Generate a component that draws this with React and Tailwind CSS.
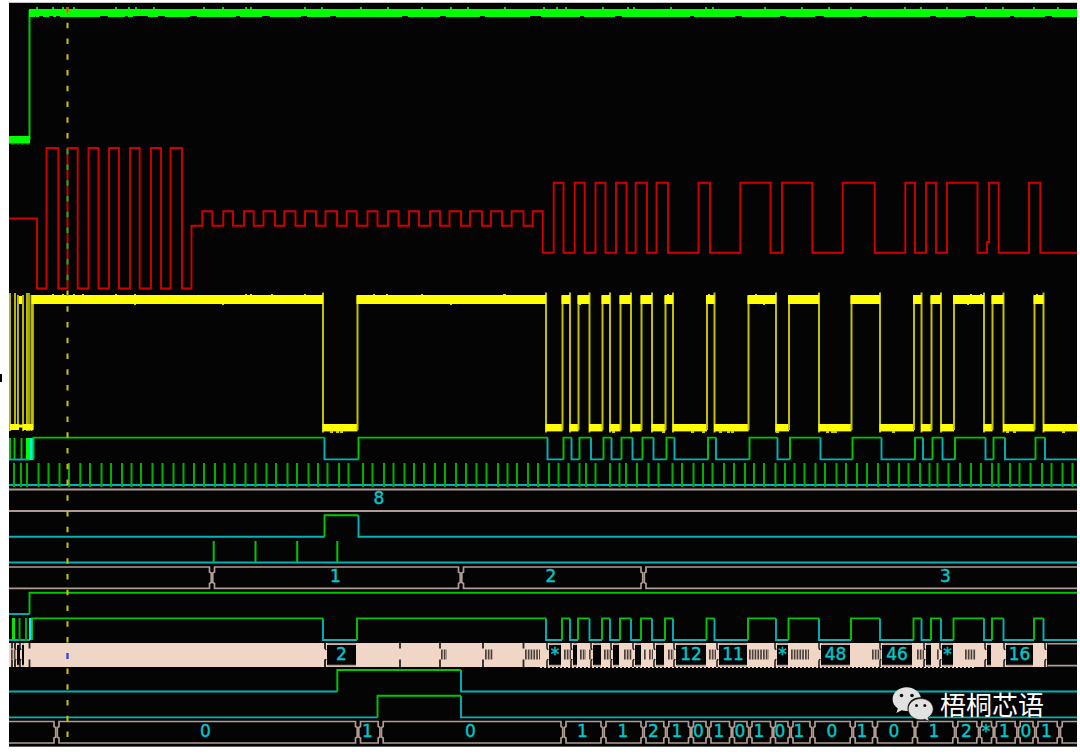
import React from 'react';

const GREEN = '#00c800';
const CYAN = '#00b4b8';
const RED = '#d00000';
const BUS = '#b09c92';
const FILL = '#f0d6c6';
const LEFT = 9;
const RIGHT = 1077;

// [rise, fall] pairs of the demodulated bit stream
const PULSES = [
  [357, 546], [562, 570], [578, 589.5], [602, 610], [620, 631], [641, 652], [665, 673],
  [706.5, 714.5], [748, 776], [788.5, 819], [851, 880], [913.5, 921.5], [931, 941],
  [953.5, 984], [992, 1003.5], [1034, 1043.5],
];

const CARRIER_BIG = [
  [46.5, 58.3], [67.5, 77.7], [88.5, 98.5], [109, 119], [130, 139.7], [151, 161], [170.5, 182],
];

const CARRIER_SMALL = [
  [202.3, 212.3], [223.3, 233], [244, 253.7], [263.5, 275], [284.3, 295.5], [305, 316],
  [325.5, 337], [346.7, 356.7], [367.5, 377.5], [388, 398.5], [409, 419], [430, 440],
  [449.5, 461], [470, 482], [491, 502], [511.7, 523.5],
];

const CARRIER_MID = [
  [553.7, 563.5], [574.7, 584.7], [595.5, 605.5], [616, 626.5], [635.7, 647], [656.5, 668],
  [698.5, 710], [740.3, 770.5], [782, 812.3], [842.7, 874.7], [905.3, 915], [926, 936], [947, 977.5],
];

const CLOCK = [
  14, 21, 27, 38.5, 48.5, 59.5, 69, 80.3, 90, 101.5, 111, 122, 131.5, 141, 152.5, 162.5, 173.5,
  183.5, 194, 204, 215, 224.5, 234.5, 245.5, 255.5, 266.5, 276, 287.5, 297, 308.5, 318, 327.5, 339,
  348.5, 363, 372.5, 384, 393.5, 404.5, 414, 424, 435, 445, 456, 466, 476.5, 486.5, 498, 507.5, 517,
  528, 538, 549, 558.5, 568.5, 579.5, 586, 595.5, 610, 619.5, 626, 637, 648.5, 658.5, 672.5, 682,
  693.5, 703, 712.5, 724, 734, 745, 754, 764, 775.5, 785, 794.5, 804.5, 815.5, 825, 836.5, 846, 857,
  867, 878, 888, 899, 908.5, 920, 929.5, 937.5, 948.5, 960, 971, 981, 992, 998.5, 1010, 1019.5,
  1030.5, 1042, 1051.5, 1062.5, 1072.5,
];

const STATE_CUTS = [212, 461, 643.5];
const STATE_LABELS = [[335.5, '1'], [551, '2'], [945.5, '3']];

const SYMBOL_CUTS = [
  56.5, 358, 380.7, 563.5, 603.5, 643.5, 666.3, 691, 708.5, 732, 749.5, 773, 790.5, 812.5, 852.7,
  875, 915, 955.3, 979.3, 994, 1017.7, 1035.5, 1059.7,
];
const SYMBOL_LABELS = [
  [205.5, '0'], [367.5, '1'], [470.5, '0'], [582.5, '1'], [623, '1'], [653.5, '2'], [677, '1'],
  [698.5, '0'], [719, '1'], [740, '0'], [759, '1'], [780, '0'], [799, '1'], [832, '0'], [862, '1'],
  [894, '0'], [934, '1'], [966.5, '2'], [986, '*'], [1004.5, '1'], [1026, '0'], [1046.5, '1'],
];

// counter bus: stable windows, with a value where there is room for one
const COUNTS = [
  [17, 20, ''], [22, 24, ''], [327, 356, '2'], [549, 561, '*'], [573, 577, ''], [593, 601, ''],
  [613, 619, ''], [635, 641, ''], [656, 664, ''], [676, 706, '12'], [719, 747, '11'],
  [777, 788, '*'], [821, 850, '48'], [882, 912, '46'], [926, 931, ''], [942, 953, '*'],
  [987, 991, ''], [1006, 1033, '16'], [1047, 1080, ''],
];
const COUNT_MARKS = [12, 15, 29.5, 325, 400, 440, 483, 523.5];
const COUNT_STRIPES = [
  [11, 16], [441, 447], [485, 493], [525, 540], [564, 571], [580, 586], [589, 591], [604, 611],
  [624, 632], [644, 646], [649, 653], [668, 674], [709, 716], [749, 769], [791, 809], [872, 881],
  [917, 924], [937, 939], [965, 976],
];

const TOP_NOISE = [
  37, 53, 63, 74, 116, 129, 136, 154, 204, 223, 246, 251, 305, 322, 361, 388, 422, 451, 468, 505,
  544, 557, 566, 603, 628, 634, 671, 706, 713, 765, 802, 829, 851, 905, 921, 947, 986, 1003, 1034, 1058,
];
const TOP_NOTCHES = [
  [35, 36], [39, 43], [49, 53], [56, 60], [100, 108], [125, 128], [133, 148], [158, 165],
  [190, 197], [236, 240], [262, 270], [301, 307], [330, 336], [402, 408], [440, 446], [480, 485],
  [530, 541], [580, 584], [615, 622], [690, 694], [735, 742], [780, 786], [815, 824], [862, 867],
  [930, 936], [966, 975], [1010, 1014], [1045, 1052],
];
const YELLOW_NOISE = [53, 63, 74, 83, 116, 135, 246, 251, 272, 305, 374, 387, 422, 504, 505, 668, 709, 756, 971, 981, 1037];
const YELLOW_DIPS = [135, 223, 451, 580, 764, 968];
const LOW_DIPS = [331, 337, 341, 613, 663, 692, 703, 720, 728, 732, 777, 827, 832, 835, 893, 1007, 1014, 1063];

function wave(start, pulses, low, high) {
  let d = start;
  pulses.forEach(([a, b]) => {
    d += ` H${a} V${high} H${b} V${low}`;
  });
  return d;
}

function Trace({ d, color, width = 1.9 }) {
  return <path d={d} fill="none" stroke={color} strokeWidth={width} />;
}

function Label({ x, y, children }) {
  return (
    <text
      x={x}
      y={y}
      textAnchor="middle"
      fill="#00c8cc"
      stroke="#00c8cc"
      strokeWidth="0.4"
      fontSize="17"
      fontFamily='"DejaVu Sans", sans-serif'
    >
      {children}
    </text>
  );
}

// two level signal: green while high and on rising edges, cyan while low and on falling ones
function Digital({ pulses, high, low, start = LEFT, shift = 0 }) {
  let up = '';
  let down = `M${start} ${low}`;
  pulses.forEach(([a, b]) => {
    down += ` H${a + shift}`;
    up += ` M${a + shift} ${low} V${high} H${b + shift}`;
    if (b < RIGHT) down += ` M${b + shift} ${high} V${low}`;
  });
  if (pulses[pulses.length - 1][1] < RIGHT) down += ` H${RIGHT}`;
  return (
    <g>
      <Trace d={down} color={CYAN} />
      <Trace d={up} color={GREEN} />
    </g>
  );
}

function Bus({ cuts, top, bottom, labels }) {
  const edges = [LEFT - 10, ...cuts, RIGHT + 10];
  return (
    <g>
      {edges.slice(0, -1).map((a, i) => {
        const b = edges[i + 1];
        return (
          <path
            key={a}
            d={`M${a + 2.5} ${top} V${top + 5} L${a + 0.8} ${top + 6} V${bottom - 6} L${a + 2.5} ${bottom - 5} V${bottom} H${b - 2.5} V${bottom - 5} L${b - 0.8} ${bottom - 6} V${top + 6} L${b - 2.5} ${top + 5} V${top} Z`}
            fill="none"
            stroke={BUS}
            strokeWidth="1.7"
          />
        );
      })}
      {labels.map(([x, t]) => <Label key={x} x={x} y={bottom - 6}>{t}</Label>)}
    </g>
  );
}

function AnalogTop() {
  return (
    <g>
      <Trace d="M29.500 140 V10" color={GREEN} width={2} />
      <rect x="29" y="9" width="1048" height="8" fill="#00ff00" />
      <rect x="9" y="136" width="21" height="7.500" fill="#00ff00" />
      {TOP_NOISE.map(x => <rect key={x} x={x - 1} y="7" width="2" height="2" fill="#00d800" />)}
      {TOP_NOTCHES.map(([a, b]) => <rect key={a} x={a} y="16" width={b - a} height="1" fill="#040404" />)}
      <path d="M11 144 h4 M17 144 h2 M21 144 h3 M26 144 h3" stroke="#00b000" />
    </g>
  );
}

function Carrier() {
  const d = wave('M9 218.5 H37 V288.5', CARRIER_BIG, 288.5, 148)
    + wave(' H191.5 V225.7', CARRIER_SMALL, 225.7, 211.3)
    + ' H532.7 V211.3 H542.7 V252.7'
    + wave('', CARRIER_MID, 252.7, 182.7)
    + ' H987 V242 H989 V182.7 H998.7 V252.7 H1029 V182.7 H1040.3 V252.7 H1077';
  return <Trace d={d} color={RED} />;
}

function Envelope() {
  const all = [[32, 323], ...PULSES];
  return (
    <g>
      <path
        d="M10 293 V431 M15 293 V430 M18 295 V430 M21 296 V303 M23 295 V431 M27 293 V431 M31.500 295 V431"
        stroke="#b8b800"
        strokeWidth="2"
      />
      <path d="M29 293 V431 M33 296 V430" stroke="#e8e800" strokeWidth="1.400" />
      <path d="M10 427 H19 M23 427 H33" stroke="#ffff00" strokeWidth="6" />
      <path d="M10 426 H32 M20.500 296 V304" stroke="#ffff00" strokeWidth="3" />
      {all.map(([a, b], i) => {
        const next = all[i + 1] ? all[i + 1][0] : RIGHT;
        return (
          <g key={a}>
            {i > 0 && <path d={`M${a + 0.5} 296 V430`} stroke="#c0c000" strokeWidth="2" />}
            <path d={`M${b} 292.5 V432.5`} stroke="#c0c000" strokeWidth="2" />
            <rect x={a - 0.5} y="295" width={b - a + 0.5} height="9" fill="#ffff00" />
            <rect x={b - 0.5} y="424" width={next - b + 1} height="7.400" fill="#ffff00" />
          </g>
        );
      })}
      {YELLOW_NOISE.map(x => <rect key={x} x={x - 1} y="294" width="2" height="1" fill="#e0e000" />)}
      {YELLOW_DIPS.map(x => <rect key={x} x={x - 1} y="304" width="2" height="1" fill="#e0e000" />)}
      {LOW_DIPS.map(x => <rect key={x} x={x - 1} y="431" width="3" height="2" fill="#d0d000" />)}
    </g>
  );
}

function Counter() {
  return (
    <g>
      <rect x="9" y="643" width="1038" height="24" fill={FILL} />
      <path d="M540 667.500 H976" stroke={FILL} strokeDasharray="2 2" />
      {COUNT_MARKS.map(x => (
        <path key={x} d={`M${x} 643 V648.5 M${x} 659.5 V667`} stroke="#2a2522" strokeWidth="1.800" />
      ))}
      {COUNT_STRIPES.map(([a, b]) => (
        <path key={a} d={`M${a} 654.5 H${b}`} stroke="#4c423c" strokeWidth="10" strokeDasharray="1.7 1.1" />
      ))}
      {COUNTS.map(([a, b, text]) => (
        <g key={a}>
          <path d={`M${a - 2} 643 V648 L${a - 1} 650 M${a - 2} 667 V661 L${a - 1} 659`} fill="none" stroke="#2a2522" strokeWidth="1.600" />
          <rect x={a} y="645" width={b - a} height="20" fill="#040404" />
          <path d={`M${a + 0.5} 643.8 H${b} M${a + 0.5} 665.6 H${b}`} stroke={BUS} strokeWidth="1.600" />
          {text && <Label x={(a + b) / 2} y={660}>{text}</Label>}
        </g>
      ))}
    </g>
  );
}

function Cursor() {
  const dash = { strokeWidth: 2, strokeDasharray: '5.5 10.25' };
  // the stroke changes colour where it crosses another trace
  return (
    <g>
      <path d="M67.500 7 V148 M67.500 290.500 V652 M67.500 668.500 V742" stroke="#c8c800" {...dash} />
      <path d="M67.500 7 V16" stroke="#d05000" {...dash} />
      <path d="M67.500 148.750 V288" stroke="#00c030" {...dash} />
      <path d="M67.500 653 V659" stroke="#3050d0" strokeWidth="2.400" />
    </g>
  );
}

function Watermark() {
  return (
    <div className="absolute right-[33px] bottom-[25px] flex items-center gap-[6px]">
      <svg viewBox="0 0 42 36" className="w-[42px] h-[36px]" aria-hidden="true">
        <path
          d="M14.800 1.200C6.900 1.200 .6 6.500 .6 13.200c0 3.800 2 7 5.200 9.200L4.400 27l5.200-2.700c1.700.5 3.400.8 5.200.8h1.200c-.3-1-.4-2-.4-3 0-6.200 5.900-11 13.300-10.800C27.500 5.500 21.700 1.200 14.800 1.200z"
          fill="#e2e2e2"
        />
        <path
          d="M28.700 12.600c-7 0-12.500 4.700-12.500 10.500s5.500 10.700 12.500 10.700c1.500 0 2.900-.2 4.200-.6l4.300 2.300-1.200-3.900c3.100-2 5.200-5 5.200-8.500 0-5.800-5.600-10.500-12.500-10.500z"
          fill="#e2e2e2"
          stroke="#222"
          strokeWidth=".7"
        />
        <circle cx="9.500" cy="9.500" r="1.800" fill="#111" />
        <circle cx="20" cy="9.500" r="1.800" fill="#111" />
        <circle cx="24.500" cy="19.500" r="1.500" fill="#111" />
        <circle cx="32.800" cy="19.500" r="1.500" fill="#111" />
      </svg>
      <span className="font-['Noto_Sans_CJK_SC',sans-serif] text-[26px] leading-[26px] text-white">梧桐芯语</span>
    </div>
  );
}

export default function App() {
  return (
    <main className="relative bg-white pt-[2px] pl-[9px] pr-[3px]">
      <div className="relative border-t border-[#c4c4c4]">
        <svg viewBox="9 3 1068 744" className="block w-full h-auto bg-[#040404]" role="img" aria-label="Signal waveforms">
          <AnalogTop />
          <Carrier />
          <Envelope />

          <Trace d="M10 438 V460 M14.500 438 V460 M21.500 438 V460" color={GREEN} />
          <Trace d="M9 459.500 H30" color={CYAN} />
          <Trace d="M28 438 V459" color="#00ff00" width={4} />
          <Trace d="M31.500 438 V460" color="#00f0f0" width={3} />
          <Digital pulses={[[32, 323], ...PULSES]} high={437.6} low={459.4} start={33} shift={1.5} />

          <Trace d="M9 485 H1077" color={CYAN} width={2} />
          <path d={CLOCK.map(x => `M${x} 463 V487`).join(' ')} stroke="#00b000" strokeWidth="2" />

          <Trace d="M9 489.500 H1077 M9 511 H1077" color={BUS} width={2} />
          <Label x={379} y={504}>8</Label>

          <Digital pulses={[[324.5, 358.5]]} high={515.3} low={536.8} />

          <Trace d="M9 562.500 H1077" color={CYAN} />
          <Trace d="M213.700 541 V562 M255.500 541 V562 M297.200 541 V562 M337.300 541 V562" color={GREEN} width={2} />

          <Bus cuts={STATE_CUTS} top={567} bottom={588.4} labels={STATE_LABELS} />

          <Digital pulses={[[29.5, RIGHT]]} high={592.7} low={614} />

          <Trace d="M9 640 H30" color={CYAN} />
          <Trace d="M13.500 618 V640" color="#00e800" width={3} />
          <Trace d="M19.500 618 V641 M26 618 V641" color="#00b000" width={2} />
          <Trace d="M30.500 618 V640" color="#00f0f0" width={3} />
          <Digital pulses={[[32, 323], ...PULSES]} high={618.4} low={640} start={32} />

          <Counter />

          <Digital pulses={[[337.3, 461]]} high={670} low={691.5} />
          <Digital pulses={[[377.5, 461]]} high={695.8} low={717.4} />

          <Bus cuts={SYMBOL_CUTS} top={721.5} bottom={743} labels={SYMBOL_LABELS} />
          <Trace d="M9 746.500 H1077" color="#5a5a5a" width={1} />

          <Cursor />
        </svg>
        <Watermark />
      </div>
      <span className="absolute left-0 top-1/2 h-[8px] w-[2px] bg-black" />
    </main>
  );
}
